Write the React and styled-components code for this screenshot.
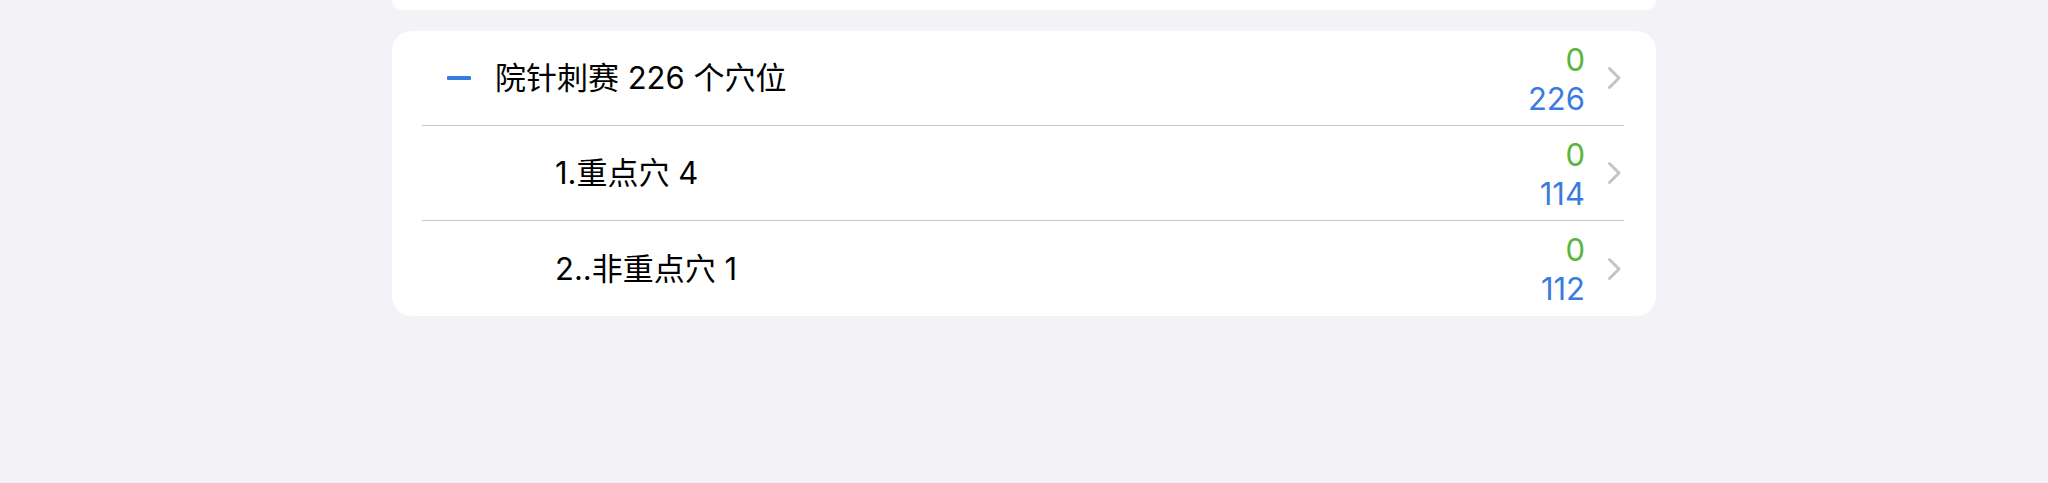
import React from "react";
import styled, { createGlobalStyle } from "styled-components";

const GlobalStyle = createGlobalStyle`
  html, body {
    margin: 0;
    padding: 0;
    background: #F2F2F7;
  }
  body {
    font-family: Inter, "Noto Sans CJK SC", sans-serif;
    color: #000;
  }
`;

const Page = styled.div`
  width: 2048px;
  height: 483px;
  display: flex;
  flex-direction: column;
  align-items: center;
  gap: 21px;
`;

const TopCard = styled.div`
  width: 1264px;
  height: 10px;
  background: #fff;
  border-radius: 0 0 20px 20px;
`;

const Card = styled.div`
  width: 1264px;
  background: #fff;
  border-radius: 20px;
  display: flex;
  flex-direction: column;
`;

const Row = styled.div`
  padding: 0 32px 0 30px;
`;

const RowInner = styled.div`
  height: ${(p) => (p.$last ? "95px" : "94px")};
  display: flex;
  align-items: center;
  border-bottom: ${(p) => (p.$last ? "none" : "1px solid #C8C8CC")};
`;

const Lead = styled.div`
  width: ${(p) => (p.$sub ? "133px" : "73px")};
  flex-shrink: 0;
  display: flex;
  align-items: center;
  padding-left: 25px;
  box-sizing: border-box;
`;

const Minus = styled.div`
  width: 24px;
  height: 4px;
  border-radius: 1px;
  background: #3A7BDF;
`;

const Title = styled.div`
  flex: 1;
  font-size: 31px;
  line-height: 1.2;
  white-space: nowrap;
`;

const Counts = styled.div`
  display: flex;
  flex-direction: column;
  align-items: flex-end;
  font-size: 31px;
  line-height: 39px;
  margin-top: 1px;
`;

const Count = styled.span`
  color: ${(p) => p.$color};
`;

const Chevron = styled.svg`
  width: 15px;
  height: 24px;
  margin-left: 22px;
  margin-right: 2px;
  flex-shrink: 0;
`;

const rows = [
  { title: "院针刺赛 226 个穴位", done: 0, total: 226, header: true },
  { title: "1.重点穴 4", done: 0, total: 114 },
  { title: "2..非重点穴 1", done: 0, total: 112 },
];

export default function App() {
  return (
    <>
      <GlobalStyle />
      <Page>
        <TopCard />
        <Card>
          {rows.map((r, i) => (
            <Row key={i}>
              <RowInner $last={i === rows.length - 1}>
                <Lead $sub={!r.header}>{r.header && <Minus />}</Lead>
                <Title>{r.title}</Title>
                <Counts>
                  <Count $color="#5BB53C">{r.done}</Count>
                  <Count $color="#3A7BDF">{r.total}</Count>
                </Counts>
                <Chevron viewBox="0 0 15 24">
                  <path
                    d="M2.5 2.5 L12 12 L2.5 21.5"
                    fill="none"
                    stroke="#C4C4C7"
                    strokeWidth="3"
                    strokeLinecap="round"
                    strokeLinejoin="round"
                  />
                </Chevron>
              </RowInner>
            </Row>
          ))}
        </Card>
      </Page>
    </>
  );
}
